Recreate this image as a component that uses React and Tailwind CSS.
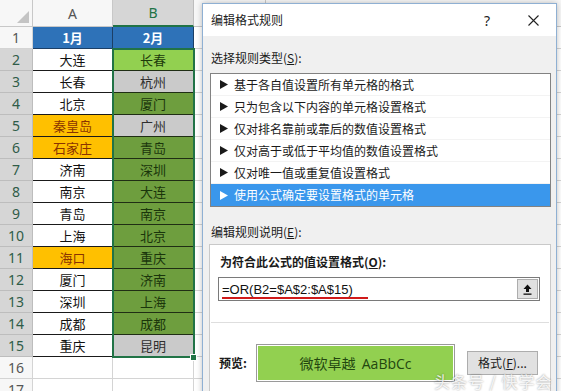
import React from "react";

const cjk = "font-['Noto_Sans_CJK_SC',sans-serif]";

const colA = [
  { t: "大连" },
  { t: "长春" },
  { t: "北京" },
  { t: "秦皇岛", o: true },
  { t: "石家庄", o: true },
  { t: "济南" },
  { t: "南京" },
  { t: "青岛" },
  { t: "上海" },
  { t: "海口", o: true },
  { t: "厦门" },
  { t: "深圳" },
  { t: "成都" },
  { t: "重庆" },
];

const colB = [
  { t: "长春", c: "light" },
  { t: "杭州", c: "grey" },
  { t: "厦门", c: "dark" },
  { t: "广州", c: "grey" },
  { t: "青岛", c: "dark" },
  { t: "深圳", c: "dark" },
  { t: "大连", c: "dark" },
  { t: "南京", c: "dark" },
  { t: "北京", c: "dark" },
  { t: "重庆", c: "dark" },
  { t: "济南", c: "dark" },
  { t: "上海", c: "dark" },
  { t: "成都", c: "dark" },
  { t: "昆明", c: "grey" },
];

const bFill = {
  light: "bg-[#92d050] text-[#1d3a0c]",
  dark: "bg-[#6e9e3e] text-[#1a350b]",
  grey: "bg-[#cacaca] text-[#2e2e2e]",
};

const rules = [
  "基于各自值设置所有单元格的格式",
  "只为包含以下内容的单元格设置格式",
  "仅对排名靠前或靠后的数值设置格式",
  "仅对高于或低于平均值的数值设置格式",
  "仅对唯一值或重复值设置格式",
  "使用公式确定要设置格式的单元格",
];

const Tri = ({ white }) => (
  <svg width="8" height="9" viewBox="0 0 8 9" className="shrink-0">
    <path d="M0 0 L8 4.5 L0 9 Z" fill={white ? "#ffffff" : "#1a1a1a"} />
  </svg>
);

const Sheet = () => {
  const rows = [];
  for (let r = 1; r <= 17; r++) {
    const sel = r >= 2 && r <= 15;
    let a = null;
    let b = null;
    if (r === 1) {
      a = (
        <div className="w-[80px] h-full flex items-center justify-center bg-[#2e72b8] text-white font-bold text-[13px] border-b border-r border-[#1c3f66]">
          1月
        </div>
      );
      b = (
        <div className="w-[81px] h-full flex items-center justify-center bg-[#2e72b8] text-white font-bold text-[13px] border-b border-r border-[#1c3f66]">
          2月
        </div>
      );
    } else if (sel) {
      const ca = colA[r - 2];
      const cb = colB[r - 2];
      a = (
        <div
          className={`w-[80px] h-full flex items-center justify-center text-[13px] border-b border-r border-[#1a1a1a] ${
            ca.o ? "bg-[#ffc000] text-[#8a3300]" : "bg-white text-[#111]"
          }`}
        >
          {ca.t}
        </div>
      );
      b = (
        <div
          className={`w-[81px] h-full flex items-center justify-center text-[13px] border-b border-r border-[#1f2e14] ${bFill[cb.c]}`}
        >
          {cb.t}
        </div>
      );
    } else {
      a = <div className="w-[80px] h-full border-b border-r border-[#d4d4d4]" />;
      b = <div className="w-[81px] h-full border-b border-r border-[#d4d4d4]" />;
    }
    rows.push(
      <div key={r} className="flex h-[22px]">
        <div
          className={`w-[33px] h-full flex items-center justify-center text-[14px] font-['Noto_Sans',sans-serif] border-b border-r ${
            sel
              ? "bg-[#d6d6d6] text-[#2f5c48] border-[#bdbdbd]"
              : "bg-[#f7f7f7] text-[#555] border-[#d4d4d4]"
          }`}
        >
          {r}
        </div>
        {a}
        {b}
        <div className="w-[72px] h-full border-b border-r border-[#d4d4d4]" />
        <div className="flex-1 h-full border-b border-[#d4d4d4]" />
      </div>
    );
  }

  return (
    <div className="relative">
      <div className="flex h-[27px] font-['Noto_Sans',sans-serif] text-[14px]">
        <div className="relative w-[33px] h-full bg-[#f7f7f7] border-b border-r border-[#c8c8c8]">
          <div className="absolute right-[3px] bottom-[3px] w-0 h-0 border-l-[12px] border-l-transparent border-b-[12px] border-b-[#c4c4c4]" />
        </div>
        <div className="w-[80px] h-full flex items-center justify-center bg-[#f7f7f7] text-[#555] border-b border-r border-[#c8c8c8]">
          A
        </div>
        <div className="w-[81px] h-full flex items-center justify-center bg-[#d6d6d6] text-[#217346] border-b-2 border-b-[#217346] border-r border-r-[#bdbdbd]">
          B
        </div>
        <div className="w-[72px] h-full bg-[#f7f7f7] border-b border-r border-[#c8c8c8]" />
        <div className="flex-1 h-full bg-[#f7f7f7] border-b border-[#c8c8c8]" />
      </div>
      {rows}
      {/* selection B2:B15 */}
      <div className="absolute left-[112px] top-[48px] w-[83px] h-[310px] border-2 border-[#217346] pointer-events-none" />
      <div className="absolute left-[190px] top-[354px] w-[7px] h-[7px] bg-[#217346] border border-white" />
    </div>
  );
};

const Dialog = () => (
  <div
    className={`absolute left-[202px] top-[3px] w-[355px] h-[400px] flex flex-col bg-[#f0f0f0] border border-[#8fb0d3] shadow-[0_0_6px_rgba(0,0,0,0.25)] text-[12px] text-[#1a1a1a] ${cjk}`}
  >
    <div className="h-[32px] shrink-0 bg-white flex items-center pl-[8px] pr-[17px]">
      <span className="text-[#222]">编辑格式规则</span>
      <span className="ml-auto font-['Noto_Sans',sans-serif] text-[14px] text-[#222]">?</span>
      <svg width="11" height="11" viewBox="0 0 11 11" className="ml-[38px]">
        <path d="M0.5 0.5 L10.5 10.5 M10.5 0.5 L0.5 10.5" stroke="#222" strokeWidth="1.1" />
      </svg>
    </div>

    <div className="pl-[8px] mt-[14px] leading-[16px]">
      选择规则类型(<u>S</u>):
    </div>
    <div className="ml-[7px] mt-[7px] w-[341px] h-[134px] bg-white border border-[#828282]">
      {rules.map((t, i) => {
        const active = i === rules.length - 1;
        return (
          <div
            key={t}
            className={`h-[22px] flex items-center gap-[6px] pl-[9px] ${
              active ? "bg-[#3a97ec] text-white" : "border-b border-[#f3f3f3] text-[#1a1a1a]"
            }`}
          >
            <Tri white={active} />
            <span>{t}</span>
          </div>
        );
      })}
    </div>

    <div className="pl-[8px] mt-[17px] leading-[16px]">
      编辑规则说明(<u>E</u>):
    </div>
    <div className="ml-[6px] mt-[4px] w-[342px] flex-1 bg-white border border-[#c9c9c9] flex flex-col">
      <div className="pl-[10px] pt-[9px] leading-[16px] font-bold">
        为符合此公式的值设置格式(<u>O</u>):
      </div>
      <div className="ml-[8px] mt-[7px] w-[322px] h-[24px] flex items-center border border-[#7a7a7a] bg-white">
        <span className="ml-[3px] pr-[15px] leading-[15px] pt-[2px] border-b-2 border-[#d01a1a] text-[13px] font-['Liberation_Sans',sans-serif] text-[#111]">
          =OR(B2=$A$2:$A$15)
        </span>
        <div className="ml-auto mr-[1px] w-[21px] h-[20px] bg-[#e1e1e1] border border-[#adadad] flex items-center justify-center">
          <svg width="9" height="11" viewBox="0 0 9 11">
            <path d="M4.5 0.5 L8.5 5 L6 5 L6 8 L3 8 L3 5 L0.5 5 Z" fill="#111" />
            <rect x="0.5" y="9.5" width="8" height="1.3" fill="#111" />
          </svg>
        </div>
      </div>
      <div className="mx-[1px] mt-[21px] border-t border-[#dedede]" />
      <div className="flex items-center mt-[21px] pl-[9px]">
        <span className="font-bold w-[37px]">预览:</span>
        <div className="w-[199px] h-[38px] border border-[#9a9a9a] bg-white p-[1px]">
          <div className="w-full h-full bg-[#92d050] flex items-center justify-center text-[14px] text-[#23470f] whitespace-pre">
            微软卓越  <span className="font-['Open_Sans',sans-serif]">AaBbCc</span>
          </div>
        </div>
        <div className="ml-[12px] w-[71px] h-[24px] bg-[#e1e1e1] border border-[#adadad] flex items-center justify-center">
          格式(<u>F</u>)...
        </div>
      </div>
    </div>
  </div>
);

export default function App() {
  return (
    <div className={`relative w-[561px] h-[391px] overflow-hidden bg-white ${cjk}`}>
      <Sheet />
      <Dialog />
      <div className="absolute left-[434px] top-[369px] text-[16px] text-white/85 tracking-[1px] [text-shadow:0_0_2px_rgba(0,0,0,0.45)]">
        头条号 / 快学会计
      </div>
    </div>
  );
}
